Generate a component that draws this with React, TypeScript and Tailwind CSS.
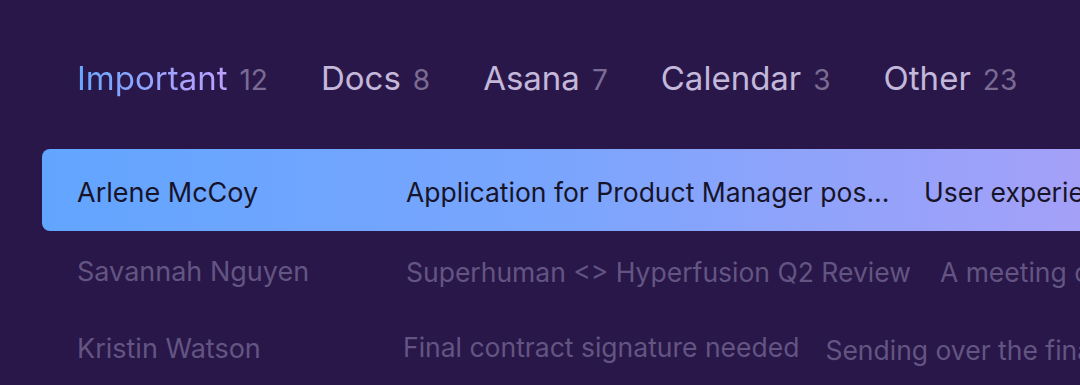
const tabs = [
  { label: "Important", count: 12, active: true },
  { label: "Docs", count: 8 },
  { label: "Asana", count: 7 },
  { label: "Calendar", count: 3 },
  { label: "Other", count: 23 },
];

const rows = [
  {
    name: "Arlene McCoy",
    subject: "Application for Product Manager position",
    preview: "User experience research results",
    selected: true,
    subjectCls: "max-w-[488px] truncate",
    previewCls: "ml-[30px]",
  },
  {
    name: "Savannah Nguyen",
    subject: "Superhuman <> Hyperfusion Q2 Review",
    preview: "A meeting on Thursday to go over the numbers",
    subjectCls: "",
    previewCls: "ml-[29px]",
  },
  {
    name: "Kristin Watson",
    subject: "Final contract signature needed",
    preview: "Sending over the final version of the contract",
    subjectCls: "-ml-[3px] -mt-[4px]",
    previewCls: "ml-[26px] mt-[2px]",
  },
];

export default function App() {
  return (
    <div
      className="w-[1080px] h-[385px] overflow-hidden bg-[#29174a] pl-[42px]"
      style={{ fontFamily: "Inter, 'Noto Sans', sans-serif" }}
    >
      {/* tabs */}
      <div className="flex items-baseline pl-[35px] pt-[54px] h-[149px]">
        {tabs.map((t) => (
          <div key={t.label} className="flex items-baseline mr-[53px]">
            <span
              className={
                t.active
                  ? "text-[33px] bg-gradient-to-r from-[#66a8ff] to-[#bda0ff] bg-clip-text text-transparent"
                  : "text-[33px] text-[#c3b8da]"
              }
            >
              {t.label}
            </span>
            <span className="ml-[12px] text-[28px] text-[#7a6b93]">{t.count}</span>
          </div>
        ))}
      </div>

      {/* list */}
      <div className="flex flex-col">
        {rows.map((r) => (
          <div
            key={r.name}
            className={
              r.selected
                ? "flex items-center h-[82px] pt-[6px] rounded-l-[8px] bg-gradient-to-r from-[#62a5ff] via-[#7aa5fd] to-[#a4a0f8] text-[#17142a] whitespace-nowrap text-[26.5px]"
                : "flex items-center h-[77px] pt-[6px] text-[#635581] whitespace-nowrap text-[26.5px]"
            }
          >
            <div className="w-[364px] shrink-0 pl-[35px] text-[27px]">{r.name}</div>
            <div className={"shrink-0 " + r.subjectCls}>{r.subject}</div>
            <div className={r.previewCls}>{r.preview}</div>
          </div>
        ))}
      </div>
    </div>
  );
}
